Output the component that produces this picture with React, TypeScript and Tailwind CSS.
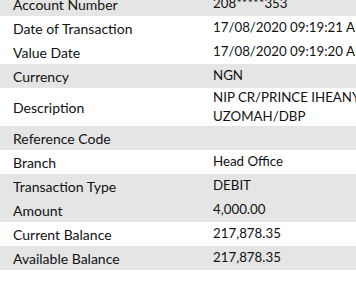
import React from 'react'

const rows: { label: string; value: React.ReactNode; grey: boolean; tall?: boolean }[] = [
  { label: 'Account Number', value: '208*****353', grey: true },
  { label: 'Date of Transaction', value: '17/08/2020 09:19:21 AM', grey: false },
  { label: 'Value Date', value: '17/08/2020 09:19:20 AM', grey: false },
  { label: 'Currency', value: 'NGN', grey: true },
  { label: 'Description', value: <>NIP CR/PRINCE IHEANYI<br />UZOMAH/DBP</>, grey: false, tall: true },
  { label: 'Reference Code', value: '', grey: true },
  { label: 'Branch', value: 'Head Office', grey: false },
  { label: 'Transaction Type', value: 'DEBIT', grey: true },
  { label: 'Amount', value: '4,000.00', grey: true },
  { label: 'Current Balance', value: '217,878.35', grey: false },
  { label: 'Available Balance', value: '217,878.35', grey: true },
]

export default function App() {
  return (
    <div className="w-[356px] h-[299px] overflow-hidden bg-white text-[#111] font-['Lato',sans-serif]">
      <div className="-mt-2">
        {rows.map((r) => (
          <div
            key={r.label}
            className={`flex items-center whitespace-nowrap ${r.tall ? 'h-[38px] leading-[19px]' : 'h-6'} ${r.grey ? 'bg-[#e5e5e5]' : 'bg-white'}`}
          >
            <div className="w-[200px] shrink-0 pl-[13px] text-[14px]">{r.label}</div>
            <div className="flex-1 pl-[13px] text-[13.3px]">{r.value}</div>
          </div>
        ))}
      </div>
    </div>
  )
}
